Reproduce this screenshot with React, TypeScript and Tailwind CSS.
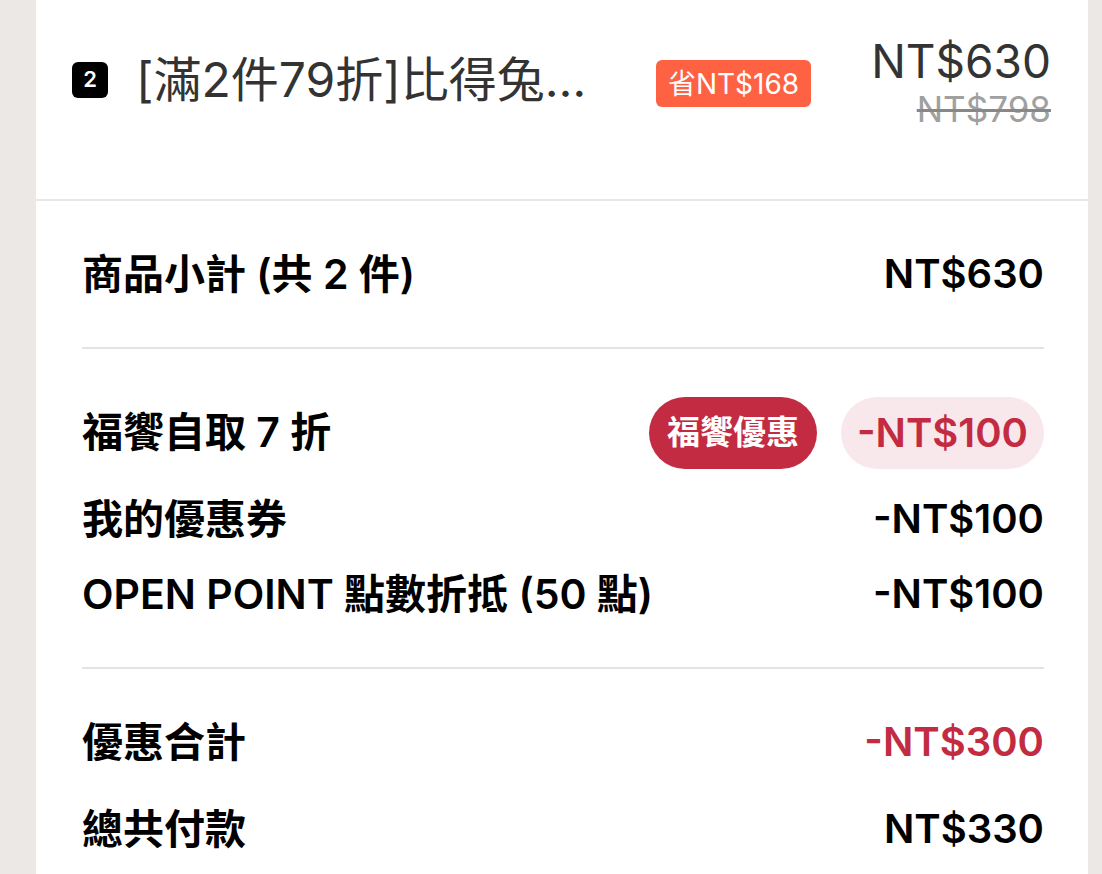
import React from "react";

const font = "font-['Inter','Noto_Sans_CJK_TC',sans-serif]";

type Row = { label: string; amount: string; red?: boolean };

function SummaryRow({ label, amount, red }: Row) {
  return (
    <div className="flex items-center justify-between h-[50px] leading-[50px]">
      <span className="text-[41px] font-semibold text-black">{label}</span>
      <span className={red ? "text-[40px] font-semibold text-[#c22b41]" : "text-[40px] font-semibold text-black"}>
        {amount}
      </span>
    </div>
  );
}

export default function App() {
  return (
    <div className={`min-h-screen bg-[#ece8e5] ${font}`}>
      <div className="ml-[36px] w-[1052px] bg-white">
        {/* cart item */}
        <div className="h-[201px] flex items-center pl-[36px] pr-[37px] pb-[40px] border-b-2 border-[#ebe7e4]">
          <div className="w-9 h-9 rounded-[6px] bg-black text-white text-[22px] font-semibold flex items-center justify-center">
            2
          </div>
          <span className="ml-[28px] text-[48px] text-[#333] whitespace-nowrap">[滿2件79折]比得兔…</span>
          <div className="flex-1" />
          <span className="mt-[8px] h-[47px] px-3 rounded-[6px] bg-[#ff6242] text-white text-[28px] flex items-center">
            省NT$168
          </span>
          <div className="ml-[60px] mt-[8px] flex flex-col items-end">
            <span className="text-[46px] leading-[50px] text-[#333]">NT$630</span>
            <span className="text-[35px] leading-[46px] text-[#a0a0a0] line-through decoration-[#888]">NT$798</span>
          </div>
        </div>

        {/* summary */}
        <div className="pl-[46px] pr-[44px]">
          <div className="py-12 border-b-2 border-[#e3e3e3]">
            <SummaryRow label="商品小計 (共 2 件)" amount="NT$630" />
          </div>

          <div className="py-12 border-b-2 border-[#e3e3e3] flex flex-col gap-[25px]">
            <div className="flex items-center h-[72px]">
              <span className="text-[41px] font-semibold text-black">福饗自取 7 折</span>
              <div className="flex-1" />
              <span className="h-[72px] px-[18px] rounded-full bg-[#c22b41] text-white text-[33px] font-semibold flex items-center">
                福饗優惠
              </span>
              <span className="ml-6 h-[72px] px-[16px] rounded-full bg-[#f8e8eb] text-[#c22b41] text-[40px] font-semibold flex items-center">
                -NT$100
              </span>
            </div>
            <SummaryRow label="我的優惠券" amount="-NT$100" />
            <SummaryRow label="OPEN POINT 點數折抵 (50 點)" amount="-NT$100" />
          </div>

          <div className="pt-12 pb-10 flex flex-col gap-[37px]">
            <SummaryRow label="優惠合計" amount="-NT$300" red />
            <SummaryRow label="總共付款" amount="NT$330" />
          </div>
        </div>
      </div>
    </div>
  );
}
